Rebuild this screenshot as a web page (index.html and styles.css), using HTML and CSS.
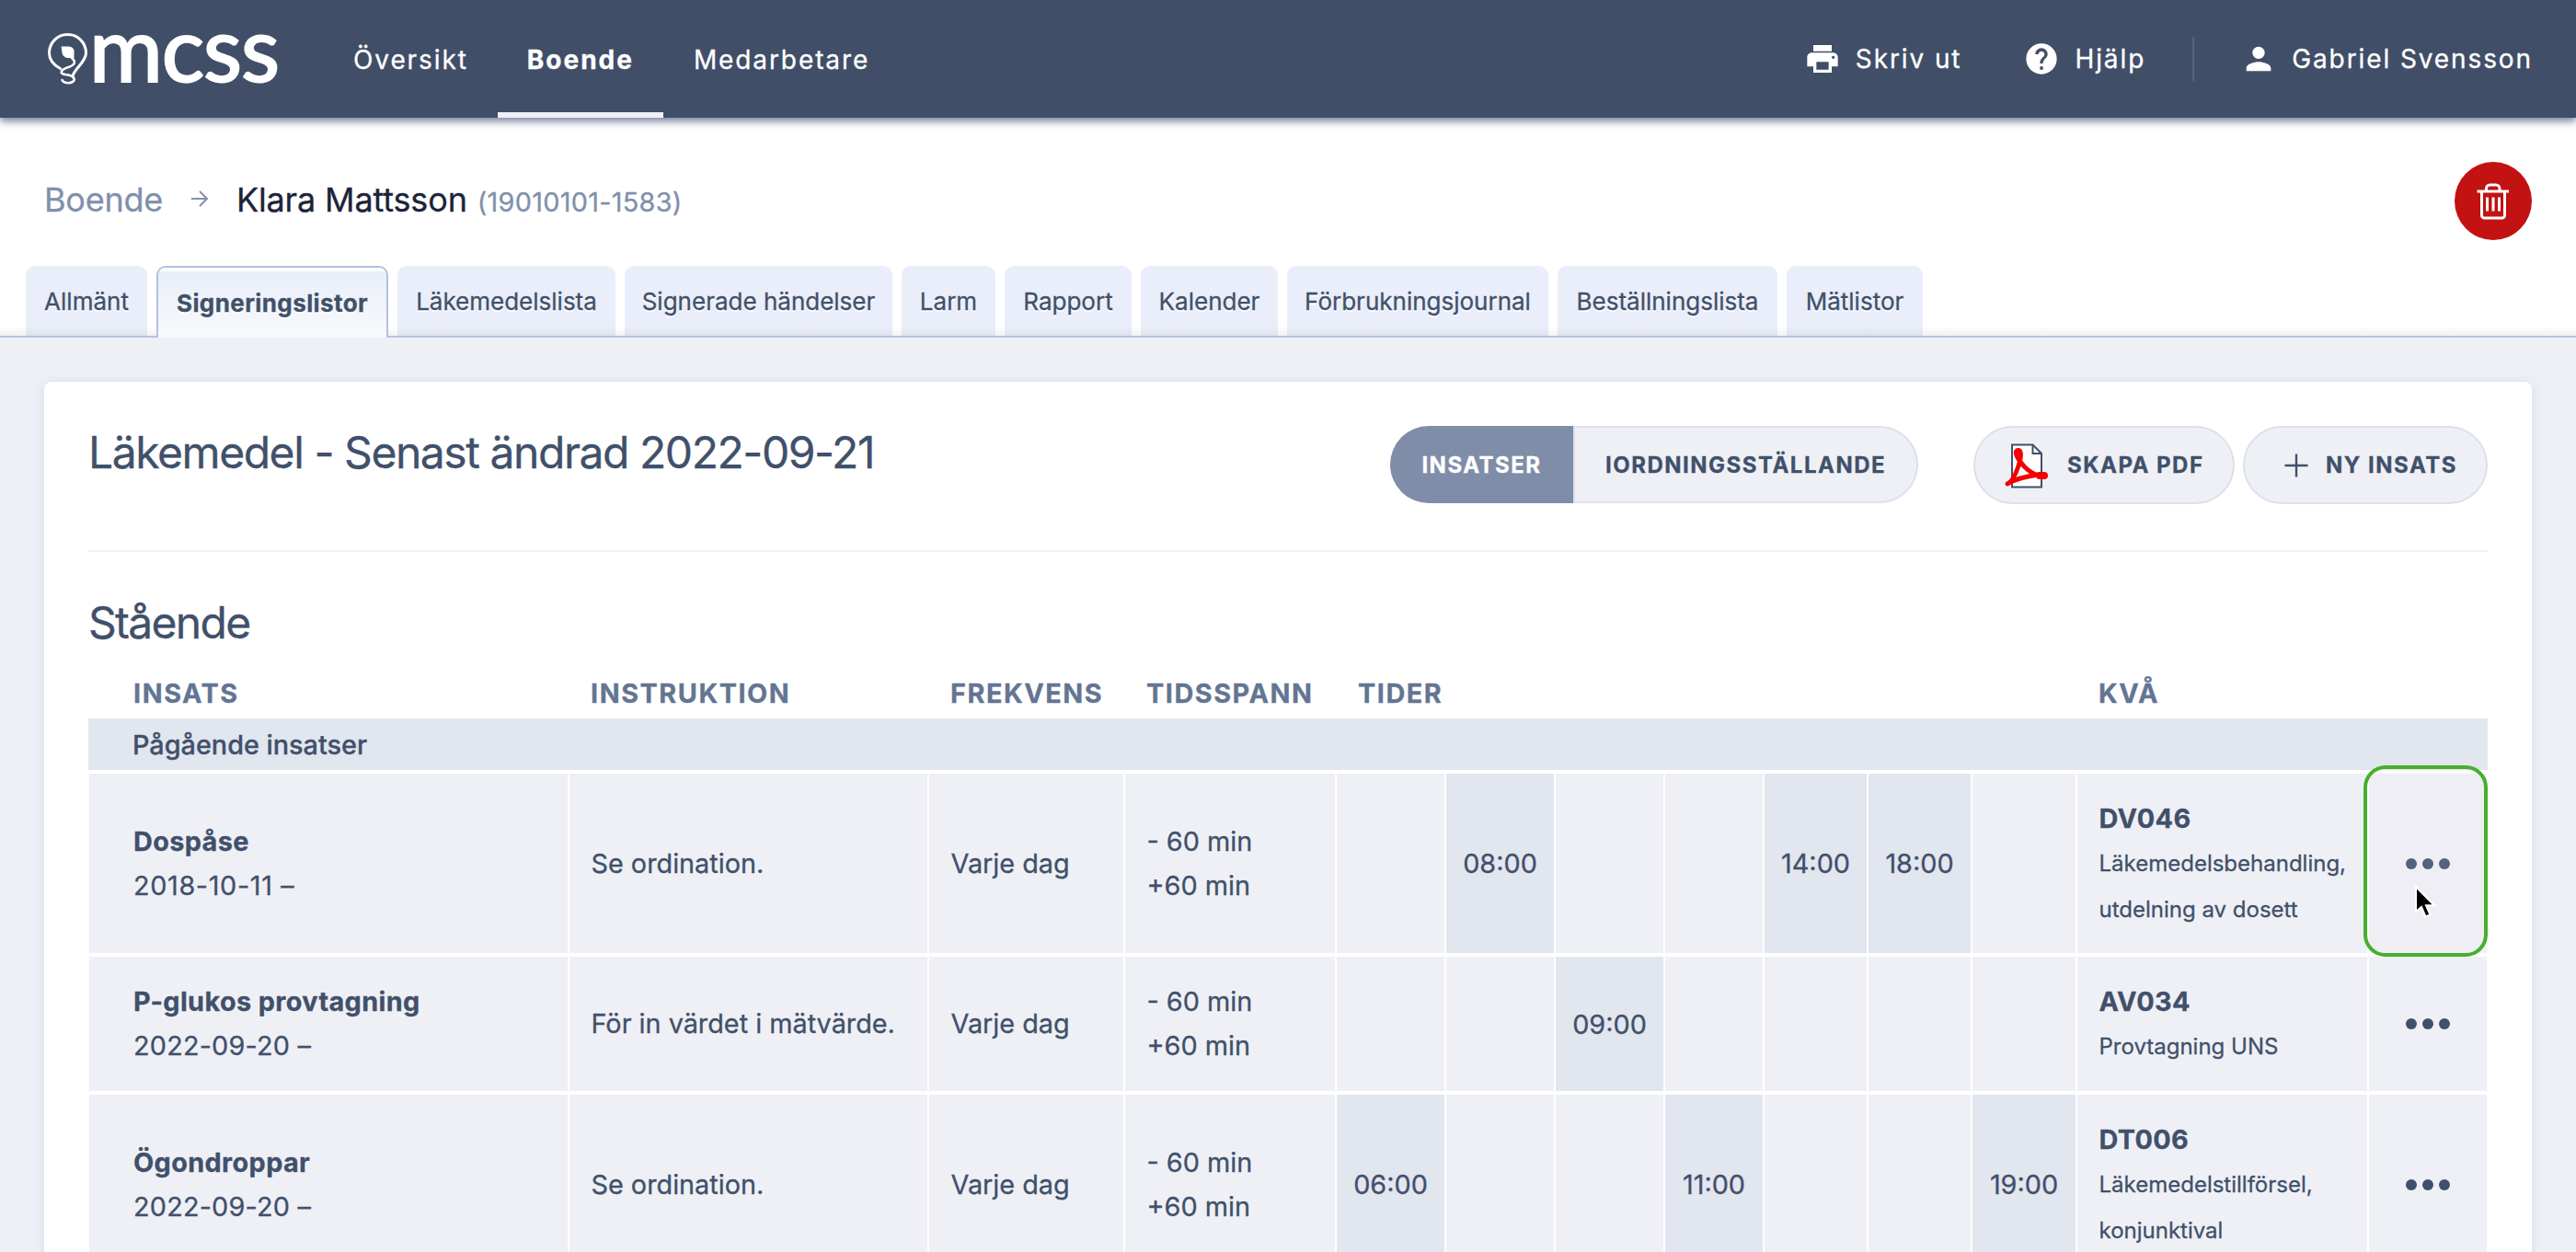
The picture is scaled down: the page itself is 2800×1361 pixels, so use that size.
FILE: index.html
```html
<!DOCTYPE html>
<html lang="sv">
<head>
<meta charset="utf-8">
<title>MCSS – Signeringslistor</title>
<link rel="stylesheet" href="styles.css">
</head>
<body>
<header class="topbar">
  <a class="logo" aria-label="mcss">
    <svg class="logo-mark" width="46" height="60" viewBox="0 0 46 60" fill="none" stroke="#fff" stroke-width="3" stroke-linecap="round">
      <path d="M14.500 39.500C6 35 2.500 29 2.500 22.500A20 20 0 0 1 42.500 22.500C42.500 32 31 39 28.500 46.500"/>
      <path stroke-width="2.600" d="M27 28C33 33 29 36.500 22 38.500C15 41 13 45 20 46C29 47 32 51 28 54C24 56 18 55.500 16.500 52"/>
      <path stroke="none" fill="#fff" d="M15.500 15.500h8a7 7 0 0 1 6 4V28h-7C18 27.500 16.500 24 16.300 21z"/>
    </svg>
    <span class="logo-text">mcss</span>
  </a>
  <nav class="mainnav">
    <a class="nav-item nav-first">Översikt</a>
    <a class="nav-item nav-active">Boende</a>
    <a class="nav-item">Medarbetare</a>
  </nav>
  <div class="tools">
    <a class="tool tool-print">
      <svg width="40" height="40" viewBox="0 0 24 24" fill="#fff"><path d="M19 8H5c-1.660 0-3 1.340-3 3v6h4v4h12v-4h4v-6c0-1.660-1.340-3-3-3zm-3 11H8v-5h8v5zm3-7c-.55 0-1-.45-1-1s.45-1 1-1 1 .45 1 1-.45 1-1 1zm-1-9H6v4h12V3z"/></svg>
      <span>Skriv ut</span>
    </a>
    <a class="tool tool-help">
      <svg width="40" height="40" viewBox="0 0 24 24" fill="#fff"><path d="M12 2C6.480 2 2 6.480 2 12s4.480 10 10 10 10-4.480 10-10S17.520 2 12 2zm1 17h-2v-2h2v2zm2.070-7.750-.9.920C13.450 12.900 13 13.500 13 15h-2v-.5c0-1.100.45-2.100 1.170-2.830l1.240-1.260c.37-.36.59-.86.59-1.410 0-1.100-.9-2-2-2s-2 .9-2 2H8c0-2.210 1.790-4 4-4s4 1.790 4 4c0 .88-.36 1.680-.93 2.250z"/></svg>
      <span>Hjälp</span>
    </a>
    <i class="divider"></i>
    <a class="tool tool-user">
      <svg width="40" height="40" viewBox="0 0 24 24" fill="#fff"><path d="M12 12c2.210 0 4-1.790 4-4s-1.790-4-4-4-4 1.790-4 4 1.790 4 4 4zm0 2c-2.670 0-8 1.340-8 4v2h16v-2c0-2.660-5.330-4-8-4z"/></svg>
      <span>Gabriel Svensson</span>
    </a>
  </div>
</header>

<section class="person">
  <div class="crumbs">
    <a class="crumb-root">Boende</a>
    <svg class="crumb-arrow" width="20" height="20" viewBox="0 0 20 20" fill="none" stroke="#8090aa" stroke-width="2"><path d="M1 10h17M10 2l8 8-8 8"/></svg>
    <span class="crumb-name">Klara Mattsson</span>
    <span class="crumb-id">(19010101-1583)</span>
  </div>
  <button class="delete" aria-label="Ta bort">
    <svg width="36" height="40" viewBox="0 0 36 40" fill="none" stroke="#fff" stroke-width="3"><path d="M.5 9h34.500M10.500 8V6a4 4 0 0 1 4-4h6.500a4 4 0 0 1 4 4V8M5.500 9v26a3 3 0 0 0 3 3h19a3 3 0 0 0 3-3V9M11.500 15.500v15M18 15.500v15M24.500 15.500v15"/></svg>
  </button>
</section>

<nav class="tabs">
  <a class="tab tab-1">Allmänt</a>
  <a class="tab tab-2 tab-active">Signeringslistor</a>
  <a class="tab tab-3">Läkemedelslista</a>
  <a class="tab tab-4">Signerade händelser</a>
  <a class="tab tab-5">Larm</a>
  <a class="tab tab-6">Rapport</a>
  <a class="tab tab-7">Kalender</a>
  <a class="tab tab-8">Förbrukningsjournal</a>
  <a class="tab tab-9">Beställningslista</a>
  <a class="tab tab-10">Mätlistor</a>
</nav>

<main class="card">
  <div class="card-head">
    <h1 class="title">Läkemedel - Senast ändrad 2022-09-21</h1>
    <div class="actions">
      <div class="segment">
        <button class="seg seg-on">INSATSER</button>
        <button class="seg seg-off">IORDNINGSSTÄLLANDE</button>
      </div>
      <button class="pill pill-pdf">
        <svg width="50" height="52" viewBox="0 0 50 52" fill="none"><path d="M9 3.500h22.500L41 13v36.500H9z" fill="#fff" stroke="#41506a" stroke-width="2"/><path d="M31.500 3.500V13H41" stroke="#41506a" stroke-width="2"/><path d="M4 46C8 44 13 37 17 23C19.500 15 19 9.500 15.500 9.500C12 9.500 12.500 15 18 22C23 29 28 34 38 37M4 46C12 41 26 37.500 38 36" stroke="#f40000" stroke-width="4.800" stroke-linecap="round" stroke-linejoin="round"/><path d="M39 37h5" stroke="#f40000" stroke-width="8" stroke-linecap="round"/></svg>
        <span>SKAPA PDF</span>
      </button>
      <button class="pill pill-new">
        <svg width="26" height="26" viewBox="0 0 26 26" stroke="#41506a" stroke-width="2.400"><path d="M13 .5v25M.5 13h25"/></svg>
        <span>NY INSATS</span>
      </button>
    </div>
  </div>
  <h2 class="subtitle">Stående</h2>

  <div class="grid grid-head">
    <div class="th th-first">INSATS</div><div class="th">INSTRUKTION</div><div class="th">FREKVENS</div><div class="th">TIDSSPANN</div><div class="th th-times">TIDER</div><div class="th">KVÅ</div>
  </div>
  <div class="group">Pågående insatser</div>

  <div class="grid row row-tall">
    <div class="td td-first"><b>Dospåse</b><span class="date date-ones">2018-10-11 –</span></div>
    <div class="td">Se ordination.</div><div class="td">Varje dag</div>
    <div class="td"><span>- 60 min</span><span>+60 min</span></div>
    <div class="time"></div><div class="time on">08:00</div><div class="time"></div><div class="time"></div><div class="time on">14:00</div><div class="time on">18:00</div><div class="time"></div>
    <div class="td"><b>DV046</b><small>Läkemedelsbehandling,</small><small>utdelning av dosett</small></div>
    <div class="more"><i></i><i></i><i></i>
      <div class="focus-ring"></div>
      <svg class="pointer" width="26" height="38" viewBox="0 0 26 38"><path d="M2 2v27l6-5 4.500 10.500 5-2.200-4.500-10H22z" fill="#000" stroke="#fff" stroke-width="2"/></svg>
    </div>
  </div>
  <div class="grid row row-short">
    <div class="td td-first"><b>P-glukos provtagning</b><span class="date">2022-09-20 –</span></div>
    <div class="td">För in värdet i mätvärde.</div><div class="td">Varje dag</div>
    <div class="td"><span>- 60 min</span><span>+60 min</span></div>
    <div class="time"></div><div class="time"></div><div class="time on">09:00</div><div class="time"></div><div class="time"></div><div class="time"></div><div class="time"></div>
    <div class="td"><b>AV034</b><small>Provtagning UNS</small></div>
    <div class="more"><i></i><i></i><i></i></div>
  </div>
  <div class="grid row row-tall">
    <div class="td td-first"><b>Ögondroppar</b><span class="date">2022-09-20 –</span></div>
    <div class="td">Se ordination.</div><div class="td">Varje dag</div>
    <div class="td"><span>- 60 min</span><span>+60 min</span></div>
    <div class="time on">06:00</div><div class="time"></div><div class="time"></div><div class="time on">11:00</div><div class="time"></div><div class="time"></div><div class="time on">19:00</div>
    <div class="td"><b>DT006</b><small>Läkemedelstillförsel,</small><small>konjunktival</small></div>
    <div class="more"><i></i><i></i><i></i></div>
  </div>
</main>
</body>
</html>
```
FILE: styles.css
```css
* { box-sizing: border-box; }
html, body { margin: 0; height: 1361px; overflow: hidden; }
body {
  display: flex;
  flex-direction: column;
  background: #eff0f6;
  color: #41506a;
  font-family: Inter, "Liberation Sans", sans-serif;
  font-size: 28.8px;
  -webkit-text-stroke: .3px;
}
button { font: inherit; color: inherit; border: 0; padding: 0; cursor: pointer; }
svg { display: block; flex: none; }

/* top bar */
.topbar {
  position: relative;
  z-index: 2;
  display: flex;
  flex: none;
  height: 128px;
  padding: 0 47px 0 51px;
  background: #414e68;
  color: #fff;
  box-shadow: 0 4px 8px rgba(65, 80, 115, .7);
  font-size: 28px;
  letter-spacing: 1.9px;
}
.logo { display: flex; width: 301px; padding-top: 35px; }
.logo-text {
  margin: -23px 0 0 0;
  font: 400 97px/80px Lato, sans-serif;
  letter-spacing: -1px;
  -webkit-text-stroke: 2.2px;
}
.mainnav { display: flex; }
.nav-item { padding: 0 32px 0 33px; line-height: 130px; }
.nav-first { padding-left: 32px; }
.nav-active { padding: 0 32px; border-bottom: 6px solid #eff0f6; font-weight: 700; letter-spacing: 2px; }
.tools { display: flex; align-items: center; margin-left: auto; line-height: 132px; }
.tool { display: flex; align-items: center; gap: 16px; }
.tool-help { margin-left: 67px; }
.divider { width: 2px; height: 48px; margin: 0 50px 0 51px; background: #5b6375; }

/* resident heading */
.person {
  display: flex;
  flex: none;
  justify-content: space-between;
  height: 161px;
  padding: 48px 48px 0;
  background: #fff;
}
.crumbs { display: flex; align-items: baseline; height: 84px; line-height: 82px; font-size: 36px; letter-spacing: -.25px; }
.crumb-root { color: #8090aa; }
.crumb-arrow { margin: 0 30px; align-self: center; transform: translateY(-2px); }
.crumb-name { color: #1b2438; letter-spacing: -.15px; }
.crumb-id { margin-left: 11px; color: #8090aa; font-size: 28.8px; letter-spacing: .3px; }
.delete {
  display: grid;
  place-items: center;
  width: 84px;
  height: 85px;
  border-radius: 50%;
  background: #c21212;
}

/* tabs */
.tabs {
  display: flex;
  flex: none;
  gap: 10px;
  height: 78px;
  padding-left: 28px;
  border-bottom: 2px solid #b7c3e0;
  background: linear-gradient(#fff 66px, #f1f1f3);
  font-size: 26px;
}
.tab {
  height: 76px;
  border-radius: 10px 10px 0 0;
  background: linear-gradient(#eaeefa 66px, #dfe2ea);
  line-height: 78px;
  text-align: center;
  white-space: nowrap;
  text-shadow: 0 2px 0 #fff;
}
.tab-active {
  height: 78px;
  border: 2px solid #b4c0e2;
  border-bottom: 0;
  background: linear-gradient(#fff 3px, #e9eef8 5px, #f8f9fd);
  font-weight: 700;
  letter-spacing: .4px;
}
.tab-1 { width: 132px; }
.tab-2 { width: 252px; }
.tab-3 { width: 237px; }
.tab-4 { width: 291px; }
.tab-5 { width: 102px; }
.tab-6 { width: 138px; }
.tab-7 { width: 149px; }
.tab-8 { width: 284px; }
.tab-9 { width: 239px; }
.tab-10 { width: 148px; }

/* card */
.card {
  flex: 1;
  min-height: 0;
  overflow: hidden;
  margin: 48px 48px 0;
  padding: 0 48px;
  border-radius: 8px 8px 0 0;
  background: #fff;
  box-shadow: 0 2px 12px rgba(100, 120, 160, .2);
}
.card-head {
  display: flex;
  justify-content: space-between;
  height: 185px;
  padding-top: 48px;
  border-bottom: 2px solid #eff0f6;
}
.title, .subtitle { margin: 0; font-size: 48px; font-weight: 400; line-height: 58px; letter-spacing: -1.45px; }
.subtitle { padding-top: 48px; height: 133px; letter-spacing: -1.7px; }
.actions { display: flex; font-size: 24px; font-weight: 700; letter-spacing: 1.5px; }
.segment { display: flex; height: 84px; margin-right: 60px; }
.seg { letter-spacing: inherit; }
.seg-on { width: 199px; border-radius: 42px 0 0 42px; background: #808da8; color: #fff; }
.seg-off {
  width: 375px;
  border: 2px solid #dee0ee;
  border-radius: 0 42px 42px 0;
  background: #eff0f6;
}
.pill {
  display: flex;
  align-items: center;
  height: 85px;
  border: 2px solid #dce0ed;
  border-radius: 43px;
  background: #eff0f6;
  letter-spacing: inherit;
}
.pill-pdf { width: 284px; margin-right: 9px; padding-left: 31px; gap: 19px; }
.pill-new { width: 266px; padding-left: 43px; gap: 19px; }

/* table */
.grid {
  display: grid;
  grid-template-columns: 522px 391px 213px 230px 119px 119px 119px 108px 113px 113px 114px 317px 128px;
  margin-left: 1px;
}
.grid-head {
  height: 48px;
  color: #637592;
  font-weight: 700;
  line-height: 42px;
  letter-spacing: 1.55px;
}
.th { padding-left: 23px; }
.th-first { padding-left: 48px; }
.th-times { grid-column: span 7; }
.group {
  height: 56px;
  margin-bottom: 4px;
  padding-left: 48px;
  background: #e2e6ef;
  font-weight: 500;
  line-height: 57px;
}
.row { margin-bottom: 4px; width: 2606px; }
.row-tall { height: 195px; }
.row-short { height: 146px; }
.td, .time, .more { border-right: 2px solid #fff; background: #eff0f6; }
.td {
  display: flex;
  flex-direction: column;
  justify-content: center;
  padding-left: 23.5px;
  line-height: 48px;
  white-space: nowrap;
}
.td-first { padding-left: 48px; }
.td b { letter-spacing: .4px; }
.td small { font-size: 24px; line-height: 49px; }
.td small + small { margin: 1px 0 -1px; }
.date { letter-spacing: .2px; }
.date-ones { letter-spacing: .65px; }
.time { display: grid; place-items: center; }
.on { background: #e2e6ef; }
.more { position: relative; display: flex; justify-content: center; align-items: center; gap: 6px; border-right: 0; }
.more i { width: 12px; height: 12px; border-radius: 50%; background: #41506a; }
.focus-ring {
  position: absolute;
  inset: -9px -1px -4px -6px;
  border: 4px solid #45b02c;
  border-radius: 24px;
  background: rgba(232, 232, 232, .12);
}
.pointer { position: absolute; left: 49px; top: 121px; }
```
